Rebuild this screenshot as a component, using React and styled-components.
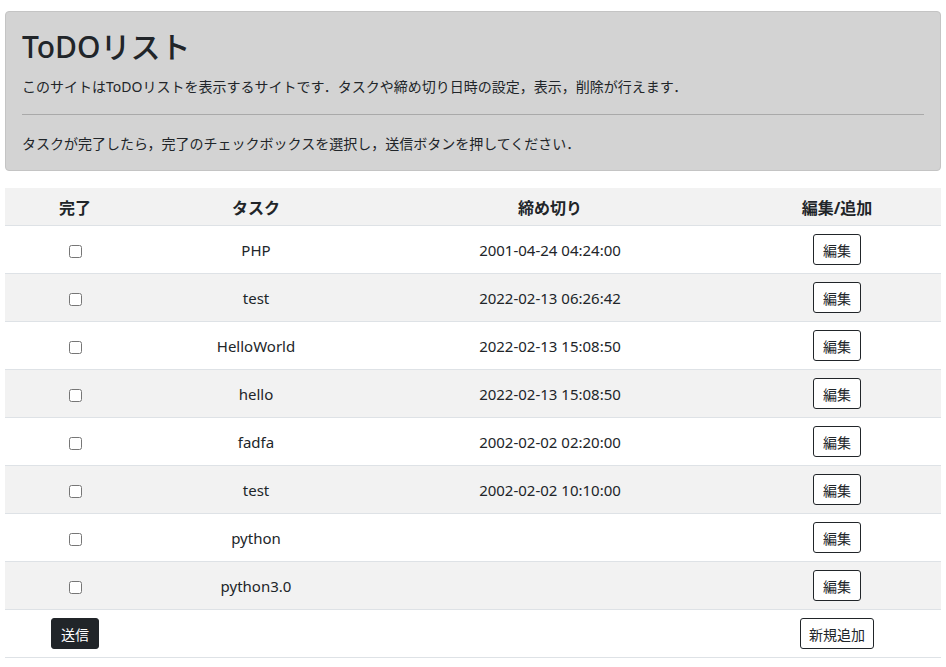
import React from 'react';
import styled, { createGlobalStyle } from 'styled-components';

const GlobalStyle = createGlobalStyle`
    body {
        margin: 0;
        background: #ffffff;
        color: #212529;
        font-family: "Noto Sans", "Noto Sans CJK JP", sans-serif;
    }
`;

const Page = styled.div`
    padding: 11px 5px 0;
`;

const Jumbotron = styled.section`
    background: #d3d3d3;
    border: 1px solid #c4c4c4;
    border-radius: 4px;
    padding: 15px 16px 16px;
`;

const Title = styled.h1`
    margin: 0 0 9px;
    font-size: 30px;
    font-weight: 500;
    line-height: 40px;
`;

const Lead = styled.p`
    margin: 0;
    font-size: 14px;
    line-height: 21px;
`;

const Divider = styled.hr`
    margin: 17px 0 18px;
    border: 0;
    border-top: 1px solid #a9a9a9;
`;

const Table = styled.table`
    width: 100%;
    margin-top: 17px;
    border-collapse: collapse;
    table-layout: fixed;
    text-align: center;
`;

const HeadCell = styled.th`
    height: 37px;
    padding: 0 8px;
    background: #f2f2f2;
    border-bottom: 1px solid #dee2e6;
    font-size: 16px;
    font-weight: 700;
`;

const Row = styled.tr`
    background: ${p => (p.$striped ? '#f2f2f2' : '#ffffff')};
`;

const Cell = styled.td`
    height: 47px;
    padding: 0 8px;
    border-bottom: 1px solid #dee2e6;
    font-size: 15px;
    vertical-align: middle;
`;

const Check = styled.input`
    margin: 0;
    width: 13px;
    height: 13px;
    vertical-align: middle;
`;

const Button = styled.button`
    height: 31px;
    padding: 0 ${p => (p.$wide ? '8px' : '9px')};
    font-family: inherit;
    font-size: 14px;
    color: ${p => (p.$dark ? '#ffffff' : '#212529')};
    background: ${p => (p.$dark ? '#212529' : '#ffffff')};
    border: 1px solid #212529;
    border-radius: 3px;
    cursor: pointer;
`;

const tasks = [
    { name: 'PHP', due: '2001-04-24 04:24:00' },
    { name: 'test', due: '2022-02-13 06:26:42' },
    { name: 'HelloWorld', due: '2022-02-13 15:08:50' },
    { name: 'hello', due: '2022-02-13 15:08:50' },
    { name: 'fadfa', due: '2002-02-02 02:20:00' },
    { name: 'test', due: '2002-02-02 10:10:00' },
    { name: 'python', due: '' },
    { name: 'python3.0', due: '' },
];

const App = () => (
    <Page>
        <GlobalStyle />
        <Jumbotron>
            <Title>ToDOリスト</Title>
            <Lead>このサイトはToDOリストを表示するサイトです．タスクや締め切り日時の設定，表示，削除が行えます．</Lead>
            <Divider />
            <Lead>タスクが完了したら，完了のチェックボックスを選択し，送信ボタンを押してください．</Lead>
        </Jumbotron>
        <Table>
            <colgroup>
                <col style={{ width: 140 }} />
                <col style={{ width: 222 }} />
                <col style={{ width: 366 }} />
                <col style={{ width: 208 }} />
            </colgroup>
            <thead>
                <tr>
                    <HeadCell>完了</HeadCell>
                    <HeadCell>タスク</HeadCell>
                    <HeadCell>締め切り</HeadCell>
                    <HeadCell>編集/追加</HeadCell>
                </tr>
            </thead>
            <tbody>
                {tasks.map((task, i) => (
                    <Row key={i} $striped={i % 2 === 1}>
                        <Cell><Check type="checkbox" /></Cell>
                        <Cell>{task.name}</Cell>
                        <Cell>{task.due}</Cell>
                        <Cell><Button type="button">編集</Button></Cell>
                    </Row>
                ))}
                <Row>
                    <Cell><Button type="submit" $dark>送信</Button></Cell>
                    <Cell />
                    <Cell />
                    <Cell><Button type="button" $wide>新規追加</Button></Cell>
                </Row>
            </tbody>
        </Table>
    </Page>
);

export default App;
